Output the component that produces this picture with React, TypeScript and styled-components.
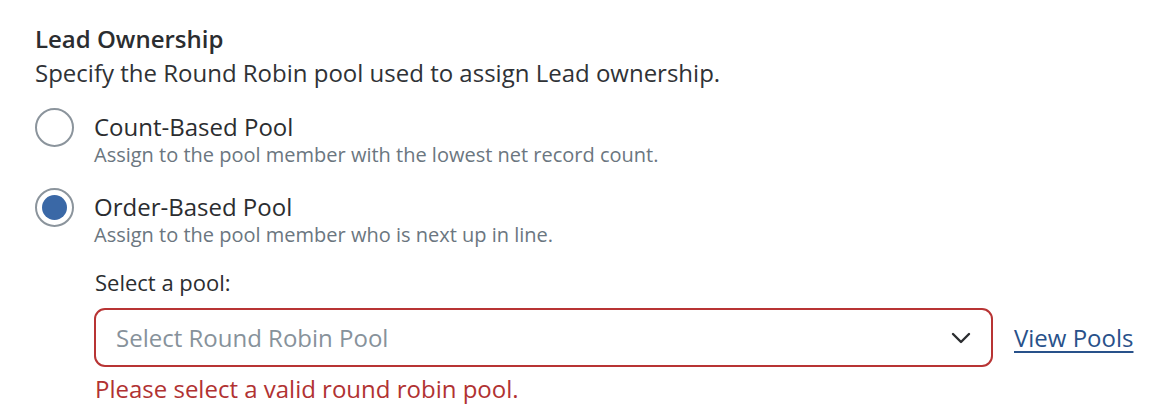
import React, { useState } from 'react';
import styled, { createGlobalStyle } from 'styled-components';

const GlobalStyle = createGlobalStyle`
  html, body {
    margin: 0;
    padding: 0;
    background: #ffffff;
  }
  body {
    font-family: "Open Sans", "Liberation Sans", sans-serif;
    color: #2c2f33;
  }
`;

const Section = styled.div`
  padding: 23px 0 0 35px;
`;

const Title = styled.div`
  font-size: 24px;
  font-weight: 600;
  line-height: 32px;
  color: #2b2d30;
`;

const Description = styled.div`
  font-size: 24px;
  line-height: 32px;
  margin-top: 2px;
  color: #2f3236;
`;

const RadioList = styled.div`
  display: flex;
  flex-direction: column;
  gap: 20px;
  margin-top: 19px;
`;

const Option = styled.label`
  display: flex;
  align-items: flex-start;
  gap: 20px;
  cursor: pointer;
`;

const Circle = styled.span<{ $checked: boolean }>`
  flex: none;
  box-sizing: border-box;
  width: 39px;
  height: 39px;
  border-radius: 50%;
  border: 2px solid #8b949c;
  display: flex;
  align-items: center;
  justify-content: center;
  &::after {
    content: '';
    width: 25px;
    height: 25px;
    border-radius: 50%;
    background: #3a68a6;
    display: ${p => (p.$checked ? 'block' : 'none')};
  }
`;

const OptionText = styled.div`
  display: flex;
  flex-direction: column;
  padding-top: 4px;
`;

const OptionLabel = styled.span`
  font-size: 24px;
  line-height: 30px;
  color: #2b2d30;
`;

const OptionHint = styled.span`
  font-size: 20px;
  line-height: 26px;
  color: #6b7680;
`;

const PoolPicker = styled.div`
  margin-left: 59px;
  margin-top: 18px;
`;

const FieldLabel = styled.div`
  font-size: 22px;
  line-height: 32px;
  padding-left: 1px;
  color: #2b2d30;
`;

const SelectRow = styled.div`
  display: flex;
  align-items: center;
  gap: 21px;
  margin-top: 10px;
  white-space: nowrap;
`;

const SelectBox = styled.div<{ $invalid: boolean }>`
  flex: none;
  box-sizing: border-box;
  width: 899px;
  height: 59px;
  border: 2px solid ${p => (p.$invalid ? '#b83434' : '#8b949c')};
  border-radius: 11px;
  display: flex;
  align-items: center;
  justify-content: space-between;
  padding: 0 20px 0 20px;
  font-size: 24px;
  color: #87929b;
`;

const ViewLink = styled.a`
  flex: none;
  font-size: 24px;
  line-height: 32px;
  color: #28518a;
  text-decoration: underline;
  text-underline-offset: 4px;
  text-decoration-thickness: 2px;
`;

const ErrorText = styled.div`
  font-size: 24px;
  line-height: 32px;
  margin-top: 6px;
  padding-left: 1px;
  color: #b13232;
`;

const Chevron = () => (
  <svg width="20" height="12" viewBox="0 0 20 12" fill="none">
    <path d="M2 2l8 8 8-8" stroke="#2b2d30" strokeWidth="2.4" strokeLinecap="round" strokeLinejoin="round" />
  </svg>
);

const options = [
  { id: 'count', label: 'Count-Based Pool', hint: 'Assign to the pool member with the lowest net record count.' },
  { id: 'order', label: 'Order-Based Pool', hint: 'Assign to the pool member who is next up in line.' },
];

export default function App() {
  const [selected, setSelected] = useState('order');
  return (
    <>
      <GlobalStyle />
      <Section>
        <Title>Lead Ownership</Title>
        <Description>Specify the Round Robin pool used to assign Lead ownership.</Description>
        <RadioList>
          {options.map(o => (
            <Option key={o.id} onClick={() => setSelected(o.id)}>
              <Circle $checked={selected === o.id} />
              <OptionText>
                <OptionLabel>{o.label}</OptionLabel>
                <OptionHint>{o.hint}</OptionHint>
              </OptionText>
            </Option>
          ))}
        </RadioList>
        {selected === 'order' && (
          <PoolPicker>
            <FieldLabel>Select a pool:</FieldLabel>
            <SelectRow>
              <SelectBox $invalid>
                <span>Select Round Robin Pool</span>
                <Chevron />
              </SelectBox>
              <ViewLink href="#">View Pools</ViewLink>
            </SelectRow>
            <ErrorText>Please select a valid round robin pool.</ErrorText>
          </PoolPicker>
        )}
      </Section>
    </>
  );
}
